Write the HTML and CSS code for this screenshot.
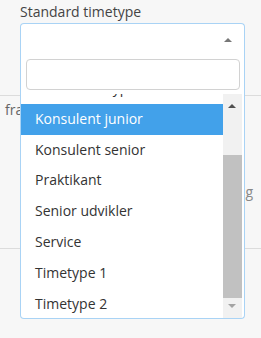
FILE: index.html
```html
<!DOCTYPE html>
<html lang="da">
<head>
    <meta charset="UTF-8">
    <meta name="viewport" content="width=device-width, initial-scale=1.0">
    <title>Standard timetype</title>
    <link rel="stylesheet" href="styles.css">
</head>
<body>

    <label class="field-label">Standard timetype</label>
    <div class="select-box">
        <span class="select-arrow"></span>
    </div>

    <!-- rows behind the open dropdown -->
    <div class="form-row">
        <span class="row-left">fra</span>
        <span class="row-right">g</span>
    </div>

    <div class="dropdown">
        <div class="search-wrap">
            <input type="text" class="search-field">
        </div>
        <div class="results">
            <ul class="options">
                <li class="option">Intern timetype</li>
                <li class="option option-active">Konsulent junior</li>
                <li class="option">Konsulent senior</li>
                <li class="option">Praktikant</li>
                <li class="option">Senior udvikler</li>
                <li class="option">Service</li>
                <li class="option">Timetype 1</li>
                <li class="option">Timetype 2</li>
            </ul>
            <div class="scrollbar">
                <span class="scroll-up"></span>
                <span class="scroll-thumb"></span>
                <span class="scroll-down"></span>
            </div>
        </div>
    </div>

</body>
</html>
```

FILE: styles.css
```css
body {
    margin: 0;
    background-color: #f7f7f7;
    font-family: "Open Sans", "Liberation Sans", sans-serif;
    font-size: 14px;
    color: #333;
    position: relative;
    height: 338px;
    overflow: hidden;
}
.field-label {
    display: block;
    padding: 2px 20px 0;
    height: 21px;
    line-height: 20px;
    color: #444;
}
.select-box {
    position: relative;
    margin-left: 20px;
    width: 223px;
    height: 32px;
    background-color: white;
    border: 1px solid #a9d3f5;
    border-bottom: none;
    border-radius: 4px 4px 0 0;
}
.select-arrow {
    position: absolute;
    right: 12px;
    top: 14px;
    border-style: solid;
    border-width: 0 4px 4px 4px;
    border-color: transparent transparent #777 transparent;
}
.form-row {
    margin-top: 39px;
    height: 152px;
    border-top: 1px solid #dcdcdc;
    border-bottom: 1px solid #dcdcdc;
    display: flex;
    justify-content: space-between;
    color: #666;
}
.row-left {
    padding: 4px 0 0 5px;
}
.row-right {
    padding: 86px 8px 0 0;
    color: #888;
}
.dropdown {
    position: absolute;
    top: 55px;
    left: 20px;
    width: 223px;
    height: 263px;
    background-color: white;
    border: 1px solid #a9d3f5;
    border-top: none;
    border-radius: 0 0 4px 4px;
}
.search-wrap {
    padding: 4px 3px 4px 5px;
}
.search-field {
    display: block;
    box-sizing: border-box;
    width: 214px;
    height: 31px;
    margin: 0;
    border: 1px solid #d2d2d2;
    border-radius: 4px;
    background-color: white;
}
.results {
    display: flex;
    height: 224px;
    overflow: hidden;
    padding-right: 2px;
}
.options {
    flex: 1;
    list-style: none;
    margin: -21px 0 0;
    padding: 0;
}
.option {
    padding: 6px 14px;
    line-height: 18.8px;
    white-space: nowrap;
}
.option-active {
    background-color: #42a1ea;
    color: white;
}
.scrollbar {
    position: relative;
    width: 19px;
    background-color: #f1f1f1;
}
.scroll-up, .scroll-down {
    position: absolute;
    left: 5px;
    border-style: solid;
}
.scroll-up {
    top: 10px;
    border-width: 0 4.5px 4.5px 4.5px;
    border-color: transparent transparent #505050 transparent;
}
.scroll-down {
    bottom: 10px;
    border-width: 4.5px 4.5px 0 4.5px;
    border-color: #a3a3a3 transparent transparent transparent;
}
.scroll-thumb {
    position: absolute;
    top: 61px;
    left: 0;
    width: 19px;
    height: 143px;
    background-color: #c1c1c1;
}
```
